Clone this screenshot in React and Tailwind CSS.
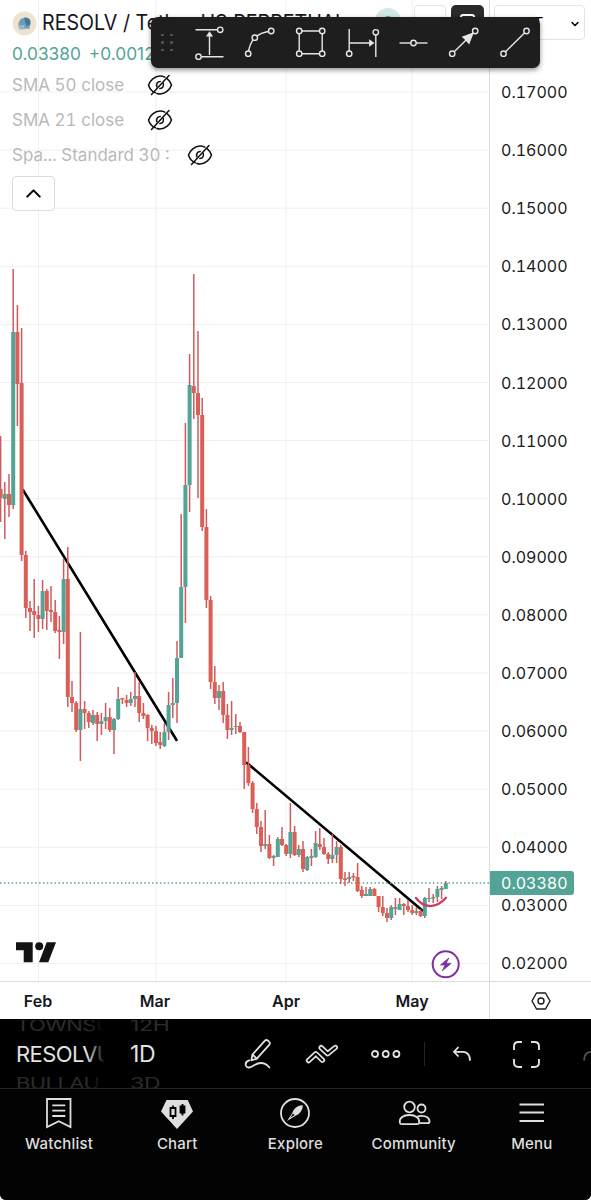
import { ChevronDown, ChevronUp } from 'lucide-react'

const UP = '#53a496'
const DOWN = '#d95f57'

const CHART_W = 489
const CHART_H = 981
const FIRST_X = 0.6
const STEP = 4.2

// [wick top, body top, body bottom, wick bottom, rising]
const CANDLES = [
  [436, 489, 498, 522, 0], [482, 494, 499, 539, 1], [474, 494, 505, 517, 0],
  [269, 332, 505, 509, 1], [305, 332, 384, 426, 0], [328, 383, 555, 561, 0],
  [551, 555, 608, 618, 0], [601, 608, 612, 631, 0], [579, 611, 615, 638, 0],
  [606, 615, 619, 632, 0], [580, 591, 619, 629, 1], [589, 591, 611, 630, 0],
  [586, 610, 612, 622, 0], [600, 612, 631, 633, 0], [616, 630, 632, 659, 0],
  [559, 579, 632, 644, 1], [547, 579, 697, 707, 0], [681, 697, 703, 712, 0],
  [701, 703, 730, 732, 0], [632, 709, 730, 761, 1], [701, 709, 713, 729, 0],
  [711, 713, 722, 728, 0], [710, 715, 723, 725, 1], [712, 715, 724, 741, 0],
  [713, 721, 724, 735, 1], [703, 717, 721, 729, 1], [708, 717, 730, 732, 0],
  [718, 719, 730, 754, 1], [687, 699, 719, 720, 1], [698, 698, 699.5, 704, 0],
  [695, 700, 703, 707, 0], [692, 699, 703, 706, 1], [672, 696, 699, 707, 1],
  [682, 696, 713, 722, 0], [703, 713, 716, 719, 0], [714, 715, 728, 741, 0],
  [725, 728, 731, 744, 0], [726, 731, 743, 746, 0], [732, 742, 745, 749, 0],
  [723, 732, 746, 747, 1], [692, 705, 732, 740, 1], [678, 703, 705, 718, 1],
  [641, 658, 703, 723, 1], [514, 587, 658, 658, 1], [423, 485, 587, 623, 1],
  [354, 385, 485, 512, 1], [274, 386, 393, 419, 0], [331, 393, 415, 498, 0],
  [398, 415, 527, 531, 0], [509, 527, 600, 608, 0], [596, 600, 682, 689, 0],
  [666, 682, 698, 704, 0], [685, 691, 698, 710, 1], [682, 691, 715, 723, 0],
  [704, 715, 730, 739, 0], [701, 728, 730, 735, 1], [714, 726, 727, 734, 1],
  [722, 726, 732, 733, 0], [732, 732, 765, 789, 0], [747, 765, 783, 786, 0],
  [781, 783, 809, 813, 0], [803, 809, 827, 834, 0], [821, 827, 846, 852, 0],
  [810, 844, 846, 849, 1], [835, 844, 858, 859, 0], [855, 856, 858, 866, 1],
  [837, 839, 857, 857, 1], [827, 839, 845, 846, 0], [844, 845, 854, 856, 0],
  [803, 832, 854, 858, 1], [826, 832, 855, 856, 0], [845, 849, 855, 857, 1],
  [841, 849, 869, 872, 0], [856, 857, 870, 871, 1], [849, 856, 858, 866, 1],
  [831, 843, 857, 858, 1], [828, 844, 847, 850, 0], [838, 847, 854, 855, 0],
  [852, 854, 859, 864, 0], [834, 855, 859, 863, 1], [841, 847, 855, 863, 1],
  [845, 847, 879, 884, 0], [872, 878.5, 880, 886, 0], [872, 877, 879, 883, 1],
  [873, 876, 877.5, 881, 0], [863, 877, 891, 892, 0], [886, 890, 896, 898, 0],
  [887, 894, 896, 896, 1], [887, 889, 896, 896, 1], [888, 889, 896, 896, 0],
  [896, 896, 907, 912, 0], [896, 907, 913, 916, 0], [908, 913, 918, 922, 0],
  [905, 907, 918, 920, 1], [898, 907, 909, 915, 1], [898, 904, 910, 910, 1],
  [903, 904, 906, 915, 0], [900, 906, 910, 912, 0], [905, 910, 913, 915, 0],
  [907, 911, 913, 915, 1], [909, 911, 916, 917, 0], [897, 898, 916, 918, 1],
  [888, 898, 899, 902, 1], [894, 897, 898.5, 903, 1], [886, 889, 897, 902, 1],
  [886, 888, 890, 899, 1], [881, 883, 889, 889, 1],
]

const PRICES = Array.from({ length: 16 }, (_, i) => (0.17 - i * 0.01).toFixed(5))
const MONTH_LINES = [38.5, 156, 286, 412]

const STUDIES = [
  { label: 'SMA 50 close', width: 'w-[135px]' },
  { label: 'SMA 21 close', width: 'w-[135px]' },
  { label: 'Spa... Standard 30 :', width: 'w-[175px]' },
]

function PriceChart() {
  return (
    <svg width={CHART_W} height={CHART_H} viewBox={`0 0 ${CHART_W} ${CHART_H}`} className="block">
      <g stroke="#efefef">
        {PRICES.map((p, i) => (
          <line key={p} x1="0" x2={CHART_W} y1={92 + i * 58.1} y2={92 + i * 58.1} />
        ))}
        {MONTH_LINES.map(x => (
          <line key={x} x1={x} x2={x} y1="0" y2={CHART_H} />
        ))}
      </g>
      <g stroke="#000" strokeWidth="2.6" strokeLinecap="round">
        <line x1="23" y1="490" x2="176.5" y2="740" />
        <line x1="247" y1="763" x2="423" y2="911" />
      </g>
      <line x1="0" x2={CHART_W} y1="883" y2="883" stroke={UP} strokeWidth="1.500" strokeDasharray="1.500 2.400" />
      {CANDLES.map(([high, top, bottom, low, up], i) => {
        const x = FIRST_X + i * STEP
        return (
          <g key={i}>
            <line x1={x} x2={x} y1={high} y2={low} stroke="#cf5a5c" strokeWidth="1.5" />
            <rect x={x - 2} y={top} width="4" height={bottom - top} fill={up ? UP : DOWN} />
          </g>
        )
      })}
      <path d="M416 898 C424 908.500 436 909 446 897.800" fill="none" stroke="#cf3a60" strokeWidth="2.300" strokeLinecap="round" />
      {/* TradingView mark */}
      <path d="M16 942.3h16.700v20H23.700v-12H16z M46.700 942.300h9.300l-7.700 20h-9.300z" fill="#131313" />
      <circle cx="39.200" cy="946.300" r="4" fill="#131313" />
      {/* event marker */}
      <circle cx="445.700" cy="964.300" r="13" fill="#fff" stroke="#7f2f9f" strokeWidth="2" />
      <path d="M448.800 958l-8.300 6.900 4.600.2-2.700 5.600 8.700-7.300-4.900-.2z" fill="#7f2f9f" stroke="#7f2f9f" strokeWidth=".8" strokeLinejoin="round" />
    </svg>
  )
}

function HiddenEye() {
  return (
    <svg width="26" height="22" viewBox="0 0 26 22" fill="none" stroke="#111" strokeWidth="1.500" strokeLinecap="round" className="mb-[2px]">
      <path d="M8.400 18.800C4.600 17.400 2.200 13.500 1.500 11 3 6.500 7.600 2 13 2c1.800 0 3.400.4 4.900 1.200M20.300 4.900C22.500 6.700 24 9 24.500 11 23 15.500 18.400 20 13 20c-1.200 0-2.200-.2-3.100-.5" />
      <path d="M9.900 12.700c-1-3 .7-5.200 3.300-5.200M16.200 9.300c.9 3-.6 5.100-3.300 5.300" />
      <path d="M4.500 20.500L22 1.500" />
    </svg>
  )
}

function Legend() {
  return (
    <div className="absolute left-3 top-[9px] w-[420px]">
      <div className="flex h-7 items-center gap-[5px]">
        <svg width="25" height="25" viewBox="0 0 25 25">
          <circle cx="12.500" cy="12.500" r="12" fill="#eee3d1" />
          <path d="M7 17.500C5 10 9 6.500 13.500 6.500c4 0 6 3 5 6.500-.5 2.500-1.500 3-1 5-3-.5-6.500.5-10.500-.5z" fill="#6f9db6" />
          <path d="M12 7c5-1.500 7.500 3 5.500 7l-3 1z" fill="#3f7898" />
          <path d="M6.500 14h6v4.500h-5z" fill="#98b8c6" />
        </svg>
        <span className="origin-left scale-x-[0.935] whitespace-nowrap text-[21px] text-[#131722]">RESOLV / Tether US PERPETUAL</span>
      </div>
      <div className="flex h-[34px] items-center gap-[8px] text-[17.300px] text-[#53a496]">
        <span>0.03380</span>
        <span>+0.00123</span>
      </div>
      {STUDIES.map(s => (
        <div key={s.label} className="flex h-[35px] items-center pb-[6px] text-[17px] text-[#b9b9b9] tabular-nums">
          <span className={`${s.width} whitespace-nowrap`}>{s.label}</span>
          <HiddenEye />
        </div>
      ))}
      <button className="flex h-[35px] w-[43px] items-center justify-center rounded-[4px] border border-[#dcdcdc] bg-white text-black">
        <ChevronUp size={25} strokeWidth={2} />
      </button>
    </div>
  )
}

function PriceAxis() {
  return (
    <div className="relative h-[981px] flex-1 border-l border-[#dcdcdc] pt-[63px] text-[16px] text-[#1b1c22] tabular-nums">
      {PRICES.map(p => (
        <div key={p} className="flex h-[58.100px] items-center pl-[11px]">{p}</div>
      ))}
      <div className="absolute left-0 top-[871px] flex h-[24px] w-[84px] items-center rounded-r-[3px] bg-[#53a496] pl-[11px] text-white">
        0.03380
      </div>
    </div>
  )
}

// Buttons of the page header, mostly covered by the drawing toolbar
function HeaderButtons() {
  return (
    <div className="absolute left-[375px] top-[5px] flex items-start">
      <div className="mt-[3px] flex size-[26px] items-center justify-center rounded-full bg-[#cfe9e4]">
        <span className="size-2.5 rounded-full bg-[#53a496]" />
      </div>
      <div className="ml-[13px] flex h-[35px] w-[32px] items-center justify-center rounded-[4px] border border-[#e3e3e3] bg-white text-[22px] text-black">+</div>
      <div className="ml-[5px] flex h-[35px] w-[33px] items-start justify-center rounded-[5px] bg-[#2a2a2a] pt-[9px]">
        <span className="h-4 w-[15px] rounded-[3px] border-2 border-white" />
      </div>
      <div className="ml-[10px] flex h-[35px] w-[91px] items-center justify-between rounded-[4px] border border-[#e3e3e3] bg-white pl-[5px] pr-[3px] pt-px text-[16.500px] text-black">
        <span className="tracking-[-0.500px]">USDT</span>
        <ChevronDown size={12} strokeWidth={3} className="mt-px" />
      </div>
    </div>
  )
}

function Node({ x, y }) {
  return <circle cx={x} cy={y} r="2.700" fill="#1e1e1e" />
}

const TOOLS = [
  <>
    <path d="M11.500 12.800h24M15 39.700h24.500M25.500 38V17" />
    <path d="M23.200 18.800l2.300-3.300 2.300 3.300z" fill="#e6e6e6" />
    <Node x={36.2} y={12.8} />
    <Node x={14.5} y={39.7} />
  </>,
  <>
    <path d="M13.200 36.700Q14.500 26 19.800 20.700T36.200 14" />
    <Node x={13.2} y={36.7} />
    <Node x={19.8} y={20.7} />
    <Node x={36.2} y={14} />
  </>,
  <>
    <path d="M13.200 14h23v22.700h-23z" />
    <Node x={13.2} y={14} />
    <Node x={36.2} y={14} />
    <Node x={36.2} y={36.7} />
    <Node x={13.2} y={36.7} />
  </>,
  <>
    <path d="M12.200 12v24M38.800 16v24M12.200 26H34" />
    <path d="M32.800 23.500l3.500 2.500-3.500 2.500z" fill="#e6e6e6" />
    <Node x={12.2} y={36.7} />
    <Node x={38.8} y={15.3} />
  </>,
  <>
    <path d="M11.500 26h28" />
    <Node x={25.5} y={26} />
  </>,
  <>
    <path d="M13.200 36.700L36.200 14" />
    <path d="M33.800 16.300L24 20l3 2.800 2.900 3.400z" fill="#e6e6e6" />
    <Node x={13.2} y={36.7} />
    <Node x={36.2} y={14} />
  </>,
  <>
    <path d="M13.500 36.700l23-22.700" />
    <Node x={13.5} y={36.7} />
    <Node x={36.5} y={14} />
  </>,
]

function DrawingToolbar() {
  return (
    <div className="absolute left-[150.500px] top-[17px] flex h-[51px] w-[389.500px] items-center rounded-[7px] bg-[#1e1e1e] shadow-[0_2px_5px_rgba(0,0,0,0.450)]">
      <div className="grid w-[33px] shrink-0 grid-cols-2 gap-x-[6px] gap-y-[5px] pl-[10.500px] pr-[10.500px]">
        {Array.from({ length: 6 }, (_, i) => (
          <span key={i} className="size-[2.500px] rounded-full bg-[#5c5c5c]" />
        ))}
      </div>
      {TOOLS.map((tool, i) => (
        <svg key={i} width="51" height="51" viewBox="0 0 51 51" fill="none" stroke="#e6e6e6" strokeWidth="1.400" className="shrink-0">
          {tool}
        </svg>
      ))}
    </div>
  )
}

function TimeAxis() {
  return (
    <div className="flex h-[38px] border-t border-[#dcdcdc] text-[16px] font-semibold text-[#15171e]">
      <div className="flex w-[489px] items-center pt-px text-center">
        <span className="w-[76px]">Feb</span>
        <span className="ml-[39px] w-[80px]">Mar</span>
        <span className="ml-[51px] w-[80px]">Apr</span>
        <span className="ml-[46px] w-[80px]">May</span>
      </div>
      <div className="flex flex-1 items-center justify-center border-l border-[#dcdcdc]">
        <svg width="20" height="18" viewBox="0 0 20 18" fill="none" stroke="#1a1a1a" strokeWidth="1.400">
          <path d="M5.500 1h9L19 9l-4.500 8h-9L1 9z" strokeLinejoin="round" />
          <circle cx="10" cy="9" r="3" />
        </svg>
      </div>
    </div>
  )
}

function Picker({ items, className }) {
  return (
    <div className={`flex h-full flex-col items-start justify-center overflow-hidden whitespace-nowrap leading-[29px] text-[#e2e2e2] ${className}`}>
      <span className="h-[29px] origin-left scale-y-[0.700] text-[#2c2c2c]">{items[0]}</span>
      <span className="h-[29px] origin-left">{items[1]}</span>
      <span className="h-[29px] origin-left scale-y-[0.700] text-[#2c2c2c]">{items[2]}</span>
    </div>
  )
}

function ChartBar() {
  return (
    <div className="flex h-[70px] items-center overflow-hidden border-b border-[#242424] pt-px text-[#e2e2e2]">
      <div className="relative ml-4 h-full w-[91px] shrink-0 overflow-hidden">
        <Picker items={['TOWNSU', 'RESOLVU', 'BULLAU']} className="text-[22px] tracking-[-0.600px]" />
        <div className="absolute inset-y-0 right-0 w-[20px] bg-linear-to-r from-transparent to-black to-90%" />
      </div>
      <Picker items={['12H', '1D', '3D']} className="ml-[23px] w-[60px] shrink-0 text-[23px] tracking-[-0.300px]" />
      <svg width="30" height="32" viewBox="0 0 30 32" fill="none" stroke="currentColor" strokeWidth="1.800" strokeLinejoin="round" strokeLinecap="round" className="ml-[53px] shrink-0">
        <path d="M8.300 22.300l1.200-5.800L21.700 2.900c1-1.100 2.300-1.100 3.300-.2l1 .9c1 .9 1 2.300.2 3.300L13.800 20.600z" />
        <path d="M9.500 16.500l4.300 4.100" />
        <path d="M6.200 22.300c-2.600.8-4 2.900-3.300 5.300.8 2.500 3.500 2.200 5.600 1.100 4.500-2.300 5.500-3.700 9.500-3.700 3.800 0 6.300 1.900 8.400 4.500" />
      </svg>
      <svg width="34" height="22" viewBox="0 0 34 22" strokeLinejoin="round" strokeLinecap="round" className="ml-[32px] shrink-0" fill="none">
        <path d="M3.600 17.600l7.300-6.800 6.500 6.400" stroke="currentColor" strokeWidth="5.400" />
        <path d="M3.600 17.600l7.300-6.800 6.500 6.400" stroke="#000" strokeWidth="2" />
        <path d="M16.200 4.700l6.500 6 7.600-6.200" stroke="currentColor" strokeWidth="5.400" />
        <path d="M16.200 4.700l6.500 6 7.600-6.200" stroke="#000" strokeWidth="2" />
      </svg>
      <svg width="32" height="10" viewBox="0 0 32 10" fill="none" stroke="currentColor" strokeWidth="1.800" className="ml-[31px] shrink-0">
        <circle cx="5" cy="5" r="3" />
        <circle cx="15.700" cy="5" r="3" />
        <circle cx="26.400" cy="5" r="3" />
      </svg>
      <span className="ml-[22px] h-6 w-px shrink-0 bg-[#252525]" />
      <svg width="20" height="17" viewBox="0 0 20 17" fill="none" stroke="currentColor" strokeWidth="1.800" className="ml-[27px] shrink-0">
        <path d="M6.500 1L2 5.800l4.500 4.700M2 5.800h8.500c4.500 0 7.500 2.800 7.500 9" />
      </svg>
      <svg width="29" height="29" viewBox="0 0 29 29" fill="none" stroke="currentColor" strokeWidth="1.900" className="ml-[40px] shrink-0">
        <path d="M2 10V6.500C2 3.500 3.500 2 6.500 2H10M19 2h3.500c3 0 4.500 1.500 4.500 4.500V10M27 19v3.500c0 3-1.500 4.500-4.500 4.500H19M10 27H6.500C3.500 27 2 25.500 2 22.500V19" />
      </svg>
      <svg width="20" height="17" viewBox="0 0 20 17" fill="none" stroke="#555" strokeWidth="1.700" className="ml-[41px] shrink-0">
        <path d="M2 14.500C2 8.500 5 5.800 9.500 5.800H18" />
      </svg>
    </div>
  )
}

const NAV = [
  {
    label: 'Watchlist',
    icon: (
      <>
        <path d="M5 3h23.500v28l-11.700-5.700L5 31z" />
        <path d="M10.300 9.300h13M10.300 14.700h13M10.300 20h13" />
      </>
    ),
  },
  {
    label: 'Chart',
    icon: (
      <>
        <path d="M6.500 4h21.300l5.200 11.500L17 33 1 15.500z" fill="currentColor" stroke="none" />
        <g stroke="#000">
          <path d="M10.500 12h5v8h-5zM13 9.500V12M13 20v3" />
          <path d="M20.500 10.500h4v6h-4z" fill="#000" />
          <path d="M22.500 8v11.500" />
        </g>
      </>
    ),
  },
  {
    label: 'Explore',
    icon: (
      <>
        <circle cx="17" cy="17" r="14" />
        <path d="M24.800 9.200c-5-.1-9.300 3.300-10.500 7.800L9 25l8.500-5.300c4.300-1.300 7.300-5.700 7.300-10.500z" fill="currentColor" stroke="none" />
        <path d="M12.300 21.700l2.700-4.200 1.600 1.600z" fill="#000" stroke="none" />
      </>
    ),
  },
  {
    label: 'Community',
    icon: (
      <>
        <circle cx="12.500" cy="11" r="5.300" />
        <circle cx="24.500" cy="12.500" r="4" />
        <path d="M2.800 26.500c-.6-4.500 3.500-7.500 9.600-7.500 6.200 0 10.300 3 9.700 7.500-.1 1-.8 1.700-1.900 1.700H4.700c-1.100 0-1.800-.700-1.900-1.700z" />
        <path d="M20.500 20.600c1.200-.6 2.600-.8 4-.8 5 0 7.900 2.300 8 5.700 0 1.100-.8 1.700-1.800 1.700h-8.500" />
      </>
    ),
  },
  { label: 'Menu', icon: <path d="M4.500 8.500H29M4.500 16.500H29M4.500 25H29" /> },
]

function BottomNav() {
  return (
    <nav className="grid h-[111px] grid-cols-5 bg-[#030303] text-[#dfdfdf]">
      {NAV.map(({ label, icon }) => (
        <div key={label} className="flex flex-col items-center pt-[7px]">
          <svg width="34" height="34" viewBox="0 0 34 34" fill="none" stroke="currentColor" strokeWidth="1.800">
            {icon}
          </svg>
          <span className="mt-[4px] text-[15px] font-medium leading-5 tracking-[0.200px]">{label}</span>
        </div>
      ))}
    </nav>
  )
}

export default function App() {
  return (
    <div className="h-[1200px] w-[591px] overflow-hidden bg-white font-['Inter',sans-serif]">
      <div className="relative flex h-[981px]">
        <div className="relative w-[489px] shrink-0">
          <PriceChart />
          <Legend />
        </div>
        <PriceAxis />
        <HeaderButtons />
        <DrawingToolbar />
      </div>
      <TimeAxis />
      <div className="overflow-hidden rounded-b-[6px] bg-black">
        <ChartBar />
        <BottomNav />
      </div>
    </div>
  )
}
